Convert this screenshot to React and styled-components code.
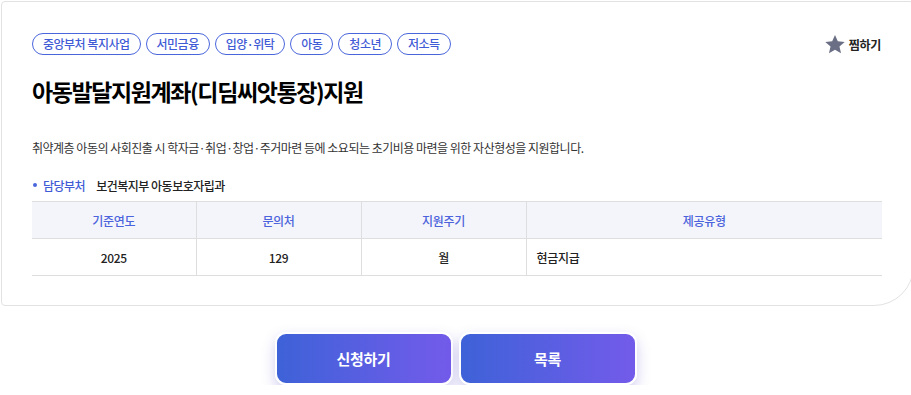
import React from "react";
import styled, { createGlobalStyle } from "styled-components";

const Global = createGlobalStyle`
  html, body { margin: 0; padding: 0; background: #fff; }
  body { font-family: "Noto Sans CJK KR", "Noto Sans", sans-serif; color: #111; overflow: hidden; }
  * { box-sizing: border-box; }
`;

const Page = styled.div`
  width: 911px;
  padding-top: 1px;
  padding-left: 1px;
`;

const Card = styled.section`
  width: 913px;
  border: 1px solid #e2e2e2;
  border-radius: 4px 4px 40px 4px;
  padding: 31px 31px 29px 30px;
  background: #fff;
`;

const TopRow = styled.div`
  display: flex;
  align-items: center;
  justify-content: space-between;
  height: 22px;
`;

const Tags = styled.div`
  display: flex;
  gap: 5px;
`;

const Tag = styled.span`
  display: inline-flex;
  align-items: center;
  height: 22px;
  padding: 0 10px;
  border: 1px solid #4a66dc;
  border-radius: 11px;
  color: #3f5bd6;
  font-size: 12px;
  font-weight: 500;
  line-height: 1;
  letter-spacing: -0.5px;
`;

const Fav = styled.button`
  display: flex;
  align-items: center;
  gap: 3px;
  border: 0;
  background: none;
  padding: 0;
  margin-right: 1px;
  font-family: inherit;
  font-size: 12px;
  font-weight: 700;
  letter-spacing: -0.3px;
  color: #222;
  cursor: pointer;
`;

const Title = styled.h1`
  margin: 20px 0 0;
  font-size: 23px;
  line-height: 32px;
  font-weight: 700;
  letter-spacing: -1.4px;
  color: #000;
`;

const Desc = styled.p`
  margin: 31px 0 0;
  font-size: 12px;
  line-height: 20px;
  color: #333;
  letter-spacing: -0.5px;
`;

const InfoRow = styled.div`
  display: flex;
  align-items: center;
  margin-top: 17px;
  height: 20px;
  font-size: 12px;
  letter-spacing: -0.5px;
`;

const Bullet = styled.span`
  width: 4px;
  height: 4px;
  border-radius: 50%;
  background: #4a66dc;
  margin: 0 6px 0 1px;
`;

const InfoLabel = styled.span`
  color: #3f5bd6;
  font-weight: 500;
  margin-right: 11px;
`;

const InfoValue = styled.span`
  color: #222;
  font-weight: 500;
`;

const Table = styled.table`
  margin-top: 6px;
  width: 850px;
  border-collapse: collapse;
  table-layout: fixed;
  font-size: 12px;
  letter-spacing: -0.3px;
`;

const Th = styled.th`
  height: 37px;
  background: #f4f5fa;
  border-top: 1px solid #dedede;
  border-bottom: 1px solid #dedede;
  border-left: 1px solid #dedede;
  color: #4b63dc;
  font-weight: 500;
  text-align: center;
  padding: 0;
  &:first-child { border-left: 0; }
`;

const Td = styled.td`
  height: 37px;
  border-bottom: 1px solid #dedede;
  border-left: 1px solid #dedede;
  color: #222;
  font-weight: 500;
  text-align: ${p => (p.$left ? "left" : "center")};
  padding: ${p => (p.$left ? "0 0 0 10px" : "0")};
  &:first-child { border-left: 0; }
`;

const Buttons = styled.div`
  display: flex;
  justify-content: center;
  gap: 6px;
  margin-top: 26px;
  padding-right: 1px;
`;

const ActionButton = styled.button`
  width: 178px;
  height: 53px;
  border: 2px solid #fff;
  border-radius: 11px;
  background: linear-gradient(90deg, #3e62d8 0%, #735bea 100%);
  box-shadow: 0 6px 14px rgba(90, 80, 200, 0.28);
  color: #fff;
  font-family: inherit;
  font-size: 15px;
  font-weight: 700;
  letter-spacing: -0.3px;
  cursor: pointer;
`;

const Star = () => (
  <svg width="22" height="21" viewBox="0 0 24 24" aria-hidden="true">
    <path
      fill="#6b6f85"
      d="M12 1.2l3.2 7.2 7.9.7-6 5.2 1.8 7.8L12 18l-6.9 4.1 1.8-7.8-6-5.2 7.9-.7z"
    />
  </svg>
);

const tags = ["중앙부처 복지사업", "서민금융", "입양·위탁", "아동", "청소년", "저소득"];
const heads = ["기준연도", "문의처", "지원주기", "제공유형"];

export default function App() {
  return (
    <Page>
      <Global />
      <Card>
        <TopRow>
          <Tags>
            {tags.map(t => (
              <Tag key={t}>{t}</Tag>
            ))}
          </Tags>
          <Fav>
            <Star />
            찜하기
          </Fav>
        </TopRow>
        <Title>아동발달지원계좌(디딤씨앗통장)지원</Title>
        <Desc>
          취약계층 아동의 사회진출 시 학자금·취업·창업·주거마련 등에 소요되는 초기비용 마련을 위한 자산형성을 지원합니다.
        </Desc>
        <InfoRow>
          <Bullet />
          <InfoLabel>담당부처</InfoLabel>
          <InfoValue>보건복지부 아동보호자립과</InfoValue>
        </InfoRow>
        <Table>
          <colgroup>
            <col style={{ width: 164 }} />
            <col style={{ width: 165 }} />
            <col style={{ width: 165 }} />
            <col style={{ width: 356 }} />
          </colgroup>
          <thead>
            <tr>
              {heads.map(h => (
                <Th key={h}>{h}</Th>
              ))}
            </tr>
          </thead>
          <tbody>
            <tr>
              <Td>2025</Td>
              <Td>129</Td>
              <Td>월</Td>
              <Td $left>현금지급</Td>
            </tr>
          </tbody>
        </Table>
      </Card>
      <Buttons>
        <ActionButton>신청하기</ActionButton>
        <ActionButton>목록</ActionButton>
      </Buttons>
    </Page>
  );
}
